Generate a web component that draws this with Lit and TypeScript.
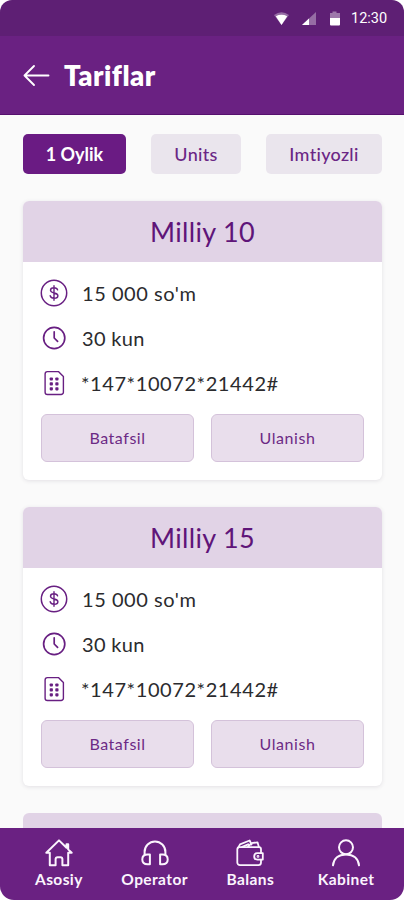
import { LitElement, html, css, svg } from "lit";
import { customElement, property } from "lit/decorators.js";
import { classMap } from "lit/directives/class-map.js";

const coinIcon = svg`<svg width="28" height="28" viewBox="0 0 28 28" fill="none" stroke="currentColor" stroke-width="1.5" stroke-linecap="round">
  <circle cx="14" cy="14" r="12.7"/>
  <path stroke-width="1.4" d="M14 6.800v14.400M17.600 10.900c-.4-1.400-1.700-2.100-3.600-2.100-2.100 0-3.500 1-3.500 2.500 0 3.600 7.400 1.800 7.400 5.400 0 1.500-1.600 2.500-3.800 2.500s-3.500-.9-3.900-2.400"/>
</svg>`;
const clockIcon = svg`<svg width="28" height="28" viewBox="0 0 28 28" fill="none" stroke="currentColor" stroke-width="1.7" stroke-linecap="round" stroke-linejoin="round">
  <circle cx="14.2" cy="14" r="10.6"/>
  <path d="M14.2 7.800v6.200l3.400 3.400"/>
</svg>`;
const simIcon = svg`<svg width="28" height="28" viewBox="0 0 28 28" fill="none" stroke="currentColor" stroke-width="1.4" stroke-linejoin="round">
  <path d="M7.400 2.600h11l5 5v15.600a2.300 2.300 0 0 1-2.300 2.300H7.400a2.300 2.300 0 0 1-2.300-2.300V4.900a2.300 2.300 0 0 1 2.300-2.300z"/>
  <g fill="currentColor" stroke="none">
    <rect x="9.700" y="8.400" width="3.200" height="3.200" rx=".8"/><rect x="15.300" y="8.400" width="3.200" height="3.200" rx=".8"/>
    <rect x="9.700" y="13.300" width="3.200" height="3.200" rx=".8"/><rect x="15.300" y="13.300" width="3.200" height="3.200" rx=".8"/>
    <rect x="9.700" y="18.200" width="3.200" height="3.200" rx=".8"/><rect x="15.300" y="18.200" width="3.200" height="3.200" rx=".8"/>
  </g>
</svg>`;

const homeIcon = svg`<svg width="30" height="30" viewBox="0 0 30 30" fill="none" stroke="currentColor" stroke-width="2" stroke-linejoin="round" stroke-linecap="round">
  <path d="M15 2.400 2.300 14.800h3.500v12.400h5.800v-6a2 2 0 0 1 2-2h2.800a2 2 0 0 1 2 2v6h5.800V14.800h3.500l-3.500-3.400V6.200h-1.700v3.500z"/>
</svg>`;
const headsetIcon = svg`<svg width="30" height="30" viewBox="0 0 30 30" fill="none" stroke="currentColor" stroke-width="2" stroke-linejoin="round" stroke-linecap="round">
  <path d="M4.600 16.800v-2.900a10.400 10.400 0 0 1 20.800 0v2.900"/>
  <path d="M9.900 16.600v9.700H7.600c-3.200 0-5.300-1.900-5.300-4.800s2.100-4.900 5.300-4.900zM20.100 16.600v9.700h2.300c3.200 0 5.300-1.900 5.300-4.800s-2.100-4.900-5.300-4.900z"/>
</svg>`;
const walletIcon = svg`<svg width="30" height="30" viewBox="0 0 30 30" fill="none" stroke="currentColor" stroke-width="1.8" stroke-linejoin="round" stroke-linecap="round">
  <path d="M26 15.200v-4a2 2 0 0 0-2-2H4.600a2.300 2.300 0 0 0-2.300 2.300v13.100a2.600 2.600 0 0 0 2.600 2.600h18.500a2.600 2.600 0 0 0 2.600-2.600v-3"/>
  <path d="M27.800 15.200h-5.400a3.200 3.200 0 0 0 0 6.400h5.400z"/>
  <path d="M3.200 9.600 5 6.400l9.600-3.900 1.900 4M13 8.800l3.500-3.600 6-.9 1.400 4.700M7.200 8.900l6-2.600"/>
  <circle cx="23" cy="18.400" r=".5"/>
</svg>`;
const personIcon = svg`<svg width="30" height="30" viewBox="0 0 30 30" fill="none" stroke="currentColor" stroke-width="2" stroke-linecap="round">
  <circle cx="15" cy="9.300" r="7"/>
  <path d="M2 27.300c.7-6.800 5.500-10.900 13-10.900s12.300 4.100 13 10.900"/>
</svg>`;

@customElement("status-bar")
class StatusBar extends LitElement {
  static styles = css`
    :host { display: flex; align-items: center; justify-content: flex-end; height: 36px; padding: 2px 16px 0 0; box-sizing: border-box; background: #5e1f74; color: #fff; }
    .glyphs { display: block; }
    .time { width: 37px; margin-left: 9px; font: 400 14.5px/20px Roboto, sans-serif; letter-spacing: 0; white-space: nowrap; }
  `;
  render() {
    return html`
      <svg class="glyphs" width="69" height="18" viewBox="0 0 69 18" fill="#fff">
        <path opacity=".35" d="M1 5Q8.500-.6 16 5L8.500 15z"/>
        <path d="M2.800 6.200Q8.500 3.300 14.200 6.200L8.500 15z"/>
        <path opacity=".35" d="M43 2v13H29z"/>
        <path d="M36 8.500V15h-7z"/>
        <path opacity=".4" d="M59.500 1.500h4V3H67v5H57V3h2.500z"/>
        <path d="M57 8h10v6.500a1 1 0 0 1-1 1h-8a1 1 0 0 1-1-1z"/>
      </svg>
      <span class="time">12:30</span>`;
  }
}

@customElement("tariff-card")
class TariffCard extends LitElement {
  @property() name = "";
  @property() price = "";
  @property() period = "";
  @property() code = "";

  static styles = css`
    :host { display: block; height: 279px; flex: none; border-radius: 6px; overflow: hidden; background: #fff; box-shadow: 0 1px 4px rgba(60, 40, 70, 0.12); color: #681f82; }
    .title { height: 61px; line-height: 62px; background: #e1d3e6; text-align: center; font-size: 27px; letter-spacing: 0.3px; color: #5f1579; }
    .rows { padding: 8px 18px 0 17px; }
    .row { display: flex; align-items: center; gap: 14px; height: 45px; }
    .row svg { flex: none; }
    .label { color: #2b2b2e; font-size: 20px; line-height: 28px; white-space: nowrap; letter-spacing: 0.55px; }
    .period { letter-spacing: 0.3px; }
    .code { margin-left: -1px; letter-spacing: 0.58px; }
    .actions { display: grid; grid-template-columns: 1fr 1fr; gap: 17px; padding: 9px 18px 0; }
    .action { height: 48px; padding: 0; border: 1px solid #d4c2da; border-radius: 6px; background: #e9deec; color: #6c2a85; font: 400 16px/46px Lato, sans-serif; letter-spacing: 0.55px; }
  `;
  render() {
    return html`
      <div class="title">${this.name}</div>
      <div class="rows">
        <div class="row">${coinIcon}<span class="label">${this.price}</span></div>
        <div class="row">${clockIcon}<span class="label period">${this.period}</span></div>
        <div class="row">${simIcon}<span class="label code">${this.code}</span></div>
      </div>
      <div class="actions">
        <button class="action">Batafsil</button>
        <button class="action">Ulanish</button>
      </div>`;
  }
}

@customElement("nav-bar")
class NavBar extends LitElement {
  static styles = css`
    :host { display: grid; grid-template-columns: repeat(4, 1fr); height: 72px; flex: none; padding: 10px 10px 0 11px; box-sizing: border-box; background: #6a2182; color: #fbf4fd; }
    .item { display: flex; flex-direction: column; align-items: center; gap: 1px; font-size: 15.5px; line-height: 20px; font-weight: 700; letter-spacing: 0.4px; white-space: nowrap; }
    .item svg { display: block; }
  `;
  private items = [
    { icon: homeIcon, label: "Asosiy" },
    { icon: headsetIcon, label: "Operator" },
    { icon: walletIcon, label: "Balans" },
    { icon: personIcon, label: "Kabinet" },
  ];
  render() {
    return this.items.map((i) => html`<div class="item">${i.icon}<span>${i.label}</span></div>`);
  }
}

@customElement("app-root")
class AppRoot extends LitElement {
  static styles = css`
    :host { display: flex; flex-direction: column; width: 404px; height: 900px; overflow: hidden; border-radius: 12px 12px 14px 14px; background: #fafafa; font-family: Lato, sans-serif; }
    status-bar { flex: none; }
    .header { display: flex; align-items: center; flex: none; height: 79px; box-sizing: border-box; padding: 2px 0 0 23px; gap: 14px; background: #6a2182; border-bottom: 1px solid #56106e; color: #fff; }
    .back { flex: none; }
    .heading { margin: 0; font-size: 27.5px; line-height: 36px; font-weight: 800; letter-spacing: 0.5px; }
    .content { flex: 1; min-height: 0; overflow: hidden; padding: 19px 22px 0 23px; display: flex; flex-direction: column; gap: 27px; }
    .tabs { display: flex; justify-content: space-between; flex: none; height: 40px; }
    .tab { border: 0; padding: 0; border-radius: 5px; background: #eae5ed; color: #6b2785; font: 500 18px/40px Lato, sans-serif; letter-spacing: 0.3px; }
    .tab.active { background: #6a1b83; color: #fff; font-weight: 700; letter-spacing: 0; }
    .monthly { width: 103px; }
    .units { width: 90px; }
    .discount { width: 116px; }
    .next-card { flex: 1; border-radius: 6px 6px 0 0; background: #e1d3e6; }
  `;
  private tabs = [
    { key: "monthly", label: "1 Oylik" },
    { key: "units", label: "Units" },
    { key: "discount", label: "Imtiyozli" },
  ];
  render() {
    return html`
      <status-bar></status-bar>
      <header class="header">
        <svg class="back" width="27" height="24" viewBox="0 0 27 24" fill="none" stroke="currentColor" stroke-width="1.9" stroke-linecap="round" stroke-linejoin="round"><path d="M25.500 11.500H1.500M11 2 1.500 11.500l9.500 9.500"/></svg>
        <h1 class="heading">Tariflar</h1>
      </header>
      <main class="content">
        <div class="tabs">
          ${this.tabs.map((t) => html`<button class=${classMap({ tab: true, active: t.key === "monthly", [t.key]: true })}>${t.label}</button>`)}
        </div>
        ${["Milliy 10", "Milliy 15"].map(
          (n) => html`<tariff-card .name=${n} .price=${"15 000 so'm"} .period=${"30 kun"} .code=${"*147*10072*21442#"}></tariff-card>`,
        )}
        <div class="next-card"></div>
      </main>
      <nav-bar></nav-bar>`;
  }
}
